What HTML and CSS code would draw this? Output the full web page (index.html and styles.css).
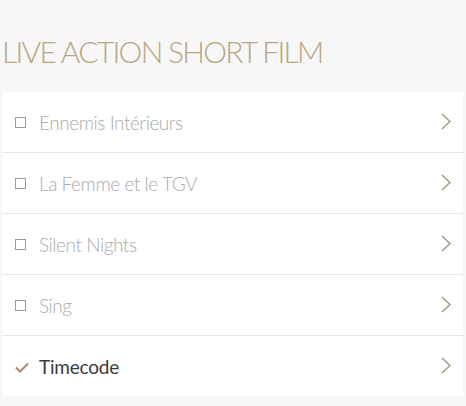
FILE: index.html
```html
<!DOCTYPE html>
<html>
<head>
<meta charset="utf-8">
<link rel="stylesheet" href="styles.css">
</head>
<body>
<h2 class="title">LIVE ACTION SHORT FILM</h2>
<ul class="list">
  <li class="item"><span class="box"></span><span class="label">Ennemis Intérieurs</span><svg class="chev" viewBox="0 0 10 17"><path d="M1 1 L9 8.5 L1 16" /></svg></li>
  <li class="item"><span class="box"></span><span class="label">La Femme et le TGV</span><svg class="chev" viewBox="0 0 10 17"><path d="M1 1 L9 8.5 L1 16" /></svg></li>
  <li class="item"><span class="box"></span><span class="label">Silent Nights</span><svg class="chev" viewBox="0 0 10 17"><path d="M1 1 L9 8.5 L1 16" /></svg></li>
  <li class="item"><span class="box"></span><span class="label">Sing</span><svg class="chev" viewBox="0 0 10 17"><path d="M1 1 L9 8.5 L1 16" /></svg></li>
  <li class="item checked"><svg class="check" viewBox="0 0 14 11"><path d="M1 5.5 L5 9.5 L13 1.5" /></svg><span class="label">Timecode</span><svg class="chev" viewBox="0 0 10 17"><path d="M1 1 L9 8.5 L1 16" /></svg></li>
</ul>
</body>
</html>
```
FILE: styles.css
```css
html, body {
  margin: 0;
  padding: 0;
  background: #f7f7f7;
  font-family: Lato, "Open Sans", sans-serif;
}
.title {
  margin: 0;
  padding: 31px 0 0 2px;
  height: 92px;
  box-sizing: border-box;
  font-weight: 300;
  font-size: 30px;
  line-height: 40px;
  color: #b9a584;
  letter-spacing: -1.7px;
}
.list {
  list-style: none;
  margin: 0 3px 0 2px;
  padding: 0;
  background: #fff;
}
.item {
  height: 60px;
  display: flex;
  align-items: center;
  border-bottom: 1px solid #e6e6e6;
  padding: 0 12px 0 13px;
}
.item:last-child {
  border-bottom: none;
}
.box {
  width: 9px;
  height: 9px;
  border: 1px solid #9a9a9a;
  flex: none;
  margin-right: 13px;
}
.check {
  width: 14px;
  height: 11px;
  flex: none;
  margin-right: 10px;
  margin-top: 2px;
  fill: none;
  stroke: #a89370;
  stroke-width: 2.2;
}
.label {
  flex: 1;
  font-size: 19px;
  font-weight: 300;
  letter-spacing: -0.45px;
  color: #ababab;
}
.checked .label {
  color: #3a3a3a;
  font-weight: 400;
  letter-spacing: -0.2px;
}
.chev {
  width: 10px;
  height: 17px;
  flex: none;
  fill: none;
  stroke: #a8957a;
  stroke-width: 1.5;
  margin-top: -1px;
}
```
